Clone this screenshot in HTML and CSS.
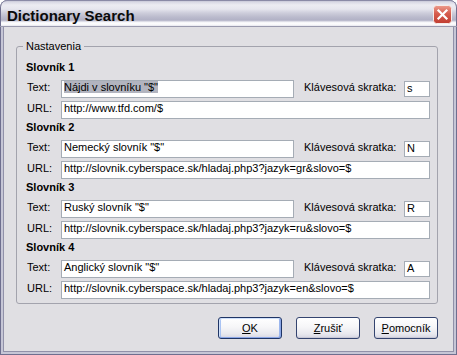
FILE: index.html
```html
<!DOCTYPE html>
<html lang="sk">
<head>
<meta charset="utf-8">
<title>Dictionary Search</title>
<link rel="stylesheet" href="styles.css">
</head>
<body>
<div class="window">
  <div class="titlebar">
    <span class="title">Dictionary Search</span>
    <span class="close">
      <svg width="19" height="19" viewBox="0 0 19 19">
        <defs>
          <linearGradient id="cg" x1="0" y1="0" x2="0" y2="1">
            <stop offset="0" stop-color="#ec9c8e"/>
            <stop offset="0.45" stop-color="#d65c4d"/>
            <stop offset="1" stop-color="#c13d31"/>
          </linearGradient>
        </defs>
        <rect x="0.5" y="0.5" width="18" height="18" rx="3" fill="url(#cg)" stroke="#f6ecea"/>
        <path d="M5.5 5.5 L13.5 13.5 M13.5 5.5 L5.5 13.5" stroke="#ffffff" stroke-width="2.2" stroke-linecap="square"/>
      </svg>
    </span>
  </div>
  <div class="client">
    <fieldset class="group">
      <legend>Nastavenia</legend>
      <div class="dicts">
        <section class="dict">
          <div class="dict-title">Slovník 1</div>
          <div class="row">
            <span class="lbl">Text:</span>
            <div class="edit text"><span class="sel">Nájdi v slovníku "$"</span></div>
            <span class="lbl-key">Klávesová skratka:</span>
            <div class="edit key">s</div>
          </div>
          <div class="row">
            <span class="lbl">URL:</span>
            <div class="edit url">http://www.tfd.com/$</div>
          </div>
        </section>
        <section class="dict">
          <div class="dict-title">Slovník 2</div>
          <div class="row">
            <span class="lbl">Text:</span>
            <div class="edit text">Nemecký slovník "$"</div>
            <span class="lbl-key">Klávesová skratka:</span>
            <div class="edit key">N</div>
          </div>
          <div class="row">
            <span class="lbl">URL:</span>
            <div class="edit url">http://slovnik.cyberspace.sk/hladaj.php3?jazyk=gr&amp;slovo=$</div>
          </div>
        </section>
        <section class="dict">
          <div class="dict-title">Slovník 3</div>
          <div class="row">
            <span class="lbl">Text:</span>
            <div class="edit text">Ruský slovník "$"</div>
            <span class="lbl-key">Klávesová skratka:</span>
            <div class="edit key">R</div>
          </div>
          <div class="row">
            <span class="lbl">URL:</span>
            <div class="edit url">http://slovnik.cyberspace.sk/hladaj.php3?jazyk=ru&amp;slovo=$</div>
          </div>
        </section>
        <section class="dict">
          <div class="dict-title">Slovník 4</div>
          <div class="row">
            <span class="lbl">Text:</span>
            <div class="edit text">Anglický slovník "$"</div>
            <span class="lbl-key">Klávesová skratka:</span>
            <div class="edit key">A</div>
          </div>
          <div class="row">
            <span class="lbl">URL:</span>
            <div class="edit url">http://slovnik.cyberspace.sk/hladaj.php3?jazyk=en&amp;slovo=$</div>
          </div>
        </section>
      </div>
    </fieldset>
    <div class="buttons">
      <button class="btn default"><u>O</u>K</button>
      <button class="btn"><u>Z</u>rušiť</button>
      <button class="btn"><u>P</u>omocník</button>
    </div>
  </div>
</div>
</body>
</html>
```
FILE: styles.css
```css
* { box-sizing: border-box; }

body {
  margin: 0;
  background: #ffffff;
  font-family: "Liberation Sans", Arial, sans-serif;
  font-size: 11px;
  color: #000;
}

.window {
  width: 457px;
  height: 355px;
  background: #e0dfe3;
  border-radius: 8px 8px 0 0;
  box-shadow: inset 0 0 0 1px #6f6f8f, inset 0 0 0 3px #c6c6d6, inset 0 0 0 4px #9191a9;
  display: flex;
  flex-direction: column;
  overflow: hidden;
}

.titlebar {
  height: 27px;
  display: flex;
  align-items: flex-start;
  padding: 5px 5px 0 7px;
  border-radius: 7px 7px 0 0;
  border-bottom: 1px solid #9a9aae;
  background: linear-gradient(to bottom,
    #b4b4c8 0px, #d8d8e4 2px, #ececf2 5px, #e6e6ee 9px,
    #cdcddb 13px, #bbbbcd 17px, #b2b2c6 20px, #c6c6d6 21px,
    #f4f4f8 22px, #ffffff 24px, #e6e6ee 26px);
  box-shadow: inset 1px 0 0 #6f6f8f, inset -1px 0 0 #6f6f8f, inset 0 1px 0 #8a8aa6;
}

.title {
  flex: 1;
  font-weight: bold;
  font-size: 15px;
  line-height: 21px;
  color: #0a0a0a;
}

.close {
  width: 19px;
  height: 19px;
  display: block;
}
.close svg { display: block; }

.client {
  flex: 1;
  margin: 0 4px 4px 4px;
  padding: 13px 15px 0 12px;
}

.group {
  margin: 0;
  padding: 7px 7px 4px 9px;
  border: 1px solid #a3a3ad;
  border-radius: 3px;
  min-width: 0;
}

.group legend {
  padding: 0 3px;
  margin-left: -3px;
  line-height: 13px;
  font-size: 11px;
}

.dicts {
  display: flex;
  flex-direction: column;
  gap: 1px;
}

.dict {
  display: flex;
  flex-direction: column;
  gap: 3px;
}

.dict-title {
  font-weight: bold;
  line-height: 14px;
  height: 14px;
  margin-bottom: 3px;
}

.row {
  display: flex;
  align-items: flex-start;
  height: 18px;
}

.lbl {
  width: 35px;
  padding-left: 1px;
  line-height: 14px;
}

.lbl-key {
  flex: 1;
  margin-left: 10px;
  line-height: 14px;
}

.edit {
  height: 18px;
  border: 1px solid #a5acb5;
  background: #ffffff;
  padding: 0 2px;
  line-height: 13px;
  white-space: nowrap;
  overflow: hidden;
}

.edit.text { width: 233px; }
.edit.key { width: 26px; height: 16px; margin-top: 1px; }
.edit.url { flex: 1; }

.sel { background: #b2b4bf; }

.buttons {
  display: flex;
  justify-content: flex-end;
  gap: 14px;
  margin-top: 13px;
}

.btn {
  width: 64px;
  height: 22px;
  padding: 0;
  border: 1px solid #34446f;
  border-radius: 3px;
  background: linear-gradient(to bottom, #ffffff 0%, #f6f6f8 45%, #e8e8ee 80%, #d6d6e2 100%);
  box-shadow: inset 0 -1px 0 #c8c8d6;
  font-family: "Liberation Sans", Arial, sans-serif;
  font-size: 11px;
  color: #000;
  line-height: 20px;
}

.btn.default {
  border-color: #1f3566;
  box-shadow: inset 1px 1px 0 #cfe0fb, inset -1px -1px 0 #8ba6e6, inset 2px 0 0 #a9c3f3, inset -2px 0 0 #9bb6ee;
}
```
